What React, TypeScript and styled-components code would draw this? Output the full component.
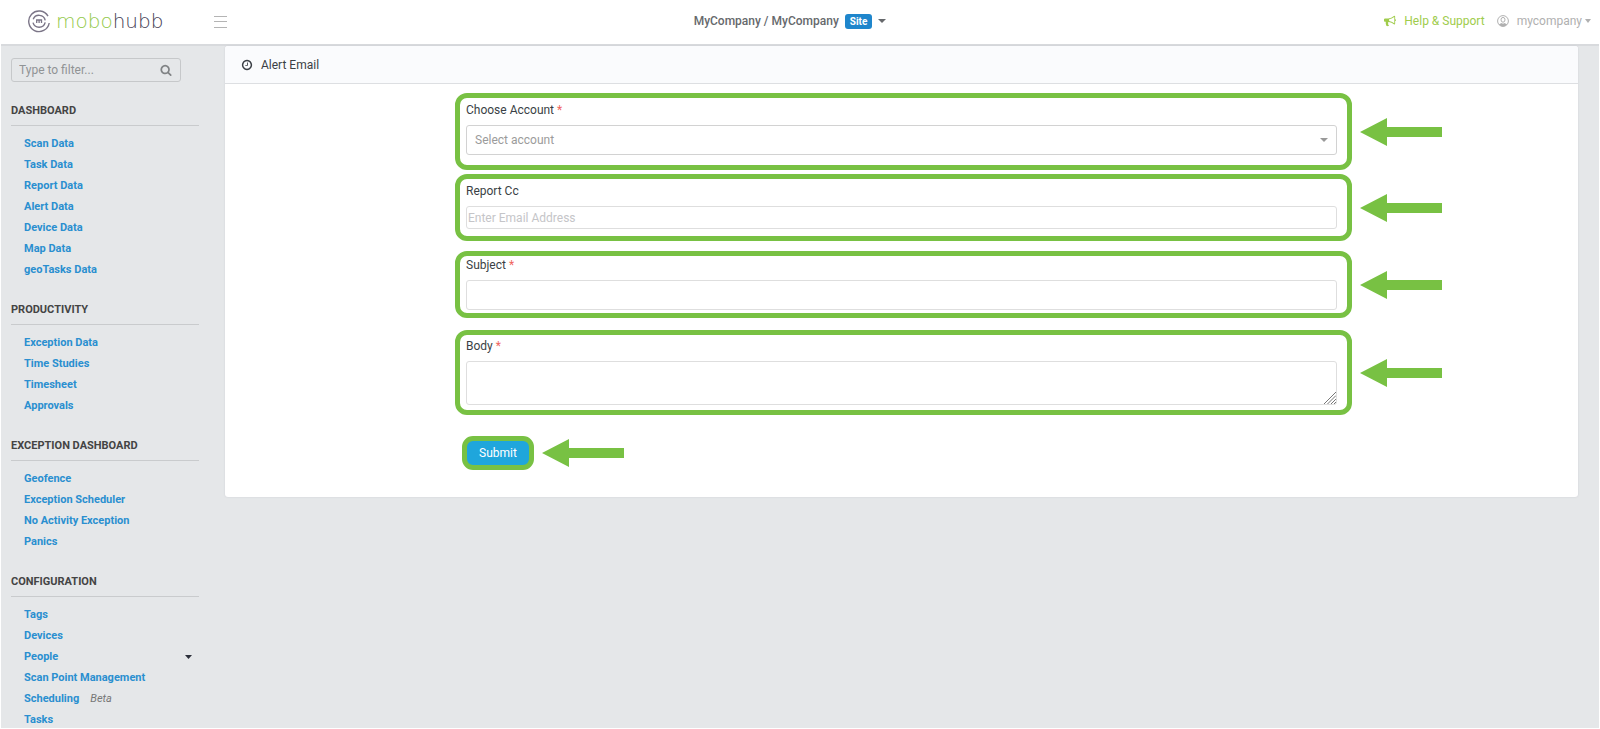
import React from "react";
import styled, { createGlobalStyle } from "styled-components";

const GREEN = "#78c143";

const GlobalStyle = createGlobalStyle`
  *, *::before, *::after { box-sizing: border-box; }
  body {
    margin: 0;
    background: #fff;
    color: #3a3f45;
    font-family: Roboto, "Liberation Sans", sans-serif;
    font-size: 12px;
    line-height: 16px;
  }
  button, input, select, textarea { font: inherit; color: inherit; }
  a { text-decoration: none; }
  svg { display: block; flex: none; }
`;

const Page = styled.div`
  display: flex;
  flex-direction: column;
  height: 100vh;
`;

const TopBar = styled.header`
  display: grid;
  grid-template-columns: 1fr auto 1fr;
  flex: none;
  align-items: center;
  height: 46px;
  margin: 0 1px;
  padding: 0 8px 2px 26px;
  border-bottom: 2px solid #d8dadd;
`;

const BrandGroup = styled.div`
  display: flex;
  align-items: center;
`;

const Brand = styled.a`
  display: flex;
  align-items: center;
  gap: 5px;
  width: 187px;
  color: #7b7587;
`;

const BrandName = styled.span<{ $dark?: boolean }>`
  font-family: "DejaVu Sans Light", "DejaVu Sans", sans-serif;
  font-weight: 200;
  font-size: 20px;
  line-height: 24px;
  color: ${(p) => (p.$dark ? "#453d55" : "#93c94a")};
`;

const PlainButton = styled.button`
  display: flex;
  align-items: center;
  gap: 6px;
  padding: 0;
  border: 0;
  background: none;
  cursor: pointer;
`;

const MenuButton = styled(PlainButton)`
  color: #b4b4b4;
`;

const SitePicker = styled(PlainButton)`
  margin-right: 38px;
  color: #66696c;
  font-weight: 500;
`;

const SiteBadge = styled.span`
  padding: 0 5px;
  border-radius: 3px;
  background: #1f86cc;
  color: #fff;
  font-size: 10px;
  font-weight: 700;
  line-height: 15px;
`;

const Account = styled.div`
  display: flex;
  justify-content: flex-end;
  align-items: center;
  gap: 12px;
`;

const HelpLink = styled.a`
  display: flex;
  align-items: center;
  gap: 8px;
  color: #a0cc4c;
`;

const UserButton = styled(PlainButton)`
  gap: 8px;
  color: #b0b0b0;
`;

const UserName = styled.span`
  display: flex;
  align-items: center;
  gap: 3px;
`;

const Workspace = styled.div`
  display: flex;
  flex: 1;
  min-height: 0;
  margin: 0 1px 1px;
  background: #e5e7e9;
`;

const Sidebar = styled.nav`
  flex: none;
  width: 224px;
  padding: 12px 26px 0 10px;
  overflow-y: auto;
  scrollbar-width: none;
`;

const Filter = styled.label`
  display: flex;
  align-items: center;
  width: 170px;
  height: 24px;
  padding: 0 8px 0 7px;
  border: 1px solid #c6c8ca;
  border-radius: 3px;
  color: #808385;
`;

const FilterInput = styled.input`
  flex: 1;
  min-width: 0;
  padding: 0;
  border: 0;
  outline: 0;
  background: none;
  &::placeholder { color: #909395; opacity: 1; }
`;

const Group = styled.section`
  padding-top: 21px;
`;

const GroupTitle = styled.h2`
  margin: 0 0 7px;
  padding-bottom: 6px;
  border-bottom: 1px solid #c9cbcd;
  color: #444;
  font-size: 11px;
  font-weight: 700;
  line-height: 16px;
`;

const LinkList = styled.ul`
  margin: 0;
  padding: 0 7px 1px 13px;
  list-style: none;
`;

const LinkRow = styled.li`
  display: flex;
  align-items: center;
  height: 21px;
`;

const NavLink = styled.a`
  color: #2a8fd0;
  font-size: 11px;
  font-weight: 700;
`;

const Beta = styled.em`
  margin-left: 11px;
  color: #777;
  font-size: 11px;
`;

const Expander = styled(PlainButton)`
  margin-left: auto;
  color: #2b2f3a;
`;

const Main = styled.main`
  flex: 1;
  min-width: 0;
  padding-right: 21px;
`;

const Panel = styled.section`
  border-radius: 3px;
  background: #fff;
  box-shadow: 0 0 2px #c9ccd2;
`;

const PanelHeader = styled.header`
  display: flex;
  align-items: center;
  gap: 8px;
  height: 38px;
  padding-left: 16px;
  border-bottom: 1px solid #dddfe2;
  border-radius: 3px 3px 0 0;
  background: #fafbfd;
`;

const PanelTitle = styled.h1`
  margin: 0;
  font-size: 12px;
  font-weight: 400;
`;

const Form = styled.form`
  padding: 9px 2px 27px 17%;
`;

const Row = styled.div<{ $gap: number }>`
  display: flex;
  align-items: center;
  gap: 8px;
  margin-bottom: ${(p) => p.$gap}px;
`;

const Highlight = styled.div<{ $top: number; $bottom: number }>`
  width: 80%;
  padding: ${(p) => p.$top}px 10px ${(p) => p.$bottom}px 6px;
  border: 5px solid ${GREEN};
  border-radius: 12px;
`;

const Label = styled.label`
  display: block;
  margin-bottom: 7px;
`;

const Required = styled.span`
  color: #f0655e;
`;

const FieldWrap = styled.div`
  position: relative;
`;

const Control = styled.input<{ $height: number }>`
  display: block;
  width: 100%;
  height: ${(p) => p.$height}px;
  padding: 0 1px;
  border: 1px solid #dedede;
  border-radius: 3px;
  outline: 0;
  background: #fff;
  &::placeholder { color: #c5c5c8; opacity: 1; }
`;

const AccountSelect = styled(Control)`
  padding: 0 8px;
  border-color: #d2d2d2;
  color: #9b9b9b;
  appearance: none;
`;

const BodyText = styled(Control)`
  resize: none;
`;

const SelectCaret = styled.span`
  position: absolute;
  top: 13px;
  right: 9px;
  color: #999;
  pointer-events: none;
`;

const Grip = styled.span`
  position: absolute;
  right: 1px;
  bottom: 1px;
  color: #777;
  pointer-events: none;
`;

const SubmitRow = styled(Row)`
  padding-left: 7px;
`;

const SubmitButton = styled.button`
  width: 72px;
  height: 34px;
  padding: 0;
  border: 5px solid ${GREEN};
  border-radius: 11px;
  background: #1fa6dc;
  color: #fff;
  cursor: pointer;
`;

const Caret = ({ width = 8 }: { width?: number }) => (
  <svg width={width} height="4" viewBox="0 0 8 4" preserveAspectRatio="none" fill="currentColor" aria-hidden="true">
    <path d="M0 0h8L4 4z" />
  </svg>
);

const Arrow = () => (
  <svg width="82" height="28" viewBox="0 0 82 28" fill={GREEN} aria-hidden="true">
    <path d="M0 14 27 0v9h55v10H27v9z" />
  </svg>
);

const Glyph = ({ size, d }: { size: number; d: string }) => (
  <svg width={size} height={size} viewBox="0 0 1792 1792" fill="currentColor" aria-hidden="true">
    <path d={d} />
  </svg>
);

const CLOCK =
  "M1024 544v448q0 14-9 23t-23 9h-320q-14 0-23-9t-9-23v-64q0-14 9-23t23-9h224v-352q0-14 9-23t23-9h64q14 0 23 9t9 23zm416 352q0-148-73-273t-198-198-273-73-273 73-198 198-73 273 73 273 198 198 273 73 273-73 198-198 73-273zm224 0q0 209-103 385.5t-279.5 279.5-385.5 103-385.5-103-279.5-279.5-103-385.5 103-385.5 279.5-279.5 385.5-103 385.5 103 279.5 279.5 103 385.5z";
const SEARCH =
  "M1216 832q0-185-131.5-316.5t-316.5-131.5-316.5 131.5-131.5 316.5 131.5 316.5 316.5 131.5 316.5-131.5 131.5-316.5zm512 832q0 52-38 90t-90 38q-54 0-90-38l-343-342q-179 124-399 124-143 0-273.5-55.5t-225-150-150-225-55.5-273.5 55.5-273.5 150-225 225-150 273.5-55.5 273.5 55.5 225 150 150 225 55.5 273.5q0 220-124 399l343 343q37 37 37 90z";
const BULLHORN =
  "M1664 640q53 0 90.5 37.5t37.5 90.5-37.5 90.5-90.5 37.5v384q0 52-38 90t-90 38q-417-347-812-380-58 19-91 66t-31 100.5 40 92.5q-20 33-23 65.5t6 58 33.5 55 48 50 61.5 50.5q-29 58-111.5 83t-168.5 11.5-132-55.5q-7-23-29.5-87.5t-32-94.5-23-89-15-101 3.5-98.5 22-110.5h-122q-66 0-113-47t-47-113v-192q0-66 47-113t113-47h480q435 0 896-384 52 0 90 38t38 90v384zm-128 604v-954q-394 302-768 343v270q377 42 768 341z";

const LogoMark = () => (
  <svg width="24" height="24" viewBox="0 0 24 24" fill="none" stroke="currentColor" strokeWidth="1.4" aria-hidden="true">
    <path d="M21 7.2A10.3 10.3 0 1 0 22.2 14" />
    <path d="M6.2 10.2A6.3 6.3 0 0 1 18.2 11.4M18.2 13.4A6.3 6.3 0 0 1 6 13.6" />
    <path d="M9.7 14v-3h4.8v3M12.1 11v3" strokeWidth="1.3" />
  </svg>
);

const MenuIcon = () => (
  <svg width="13" height="13" viewBox="0 0 13 13" stroke="currentColor" aria-hidden="true">
    <path d="M0 1.5h13M0 6.5h13M0 12.5h13" />
  </svg>
);

const UserIcon = () => (
  <svg width="12" height="12" viewBox="0 0 12 12" fill="none" stroke="currentColor" aria-hidden="true">
    <circle cx="6" cy="6" r="5.4" />
    <ellipse cx="6" cy="4.8" rx="2" ry="2.4" />
    <path d="M1.8 9.4 4.4 8q1.6 1.2 3.2 0l2.6 1.4Q6 13.6 1.8 9.4z" fill="currentColor" stroke="none" />
  </svg>
);

const groups = [
  {
    title: "DASHBOARD",
    links: ["Scan Data", "Task Data", "Report Data", "Alert Data", "Device Data", "Map Data", "geoTasks Data"],
  },
  { title: "PRODUCTIVITY", links: ["Exception Data", "Time Studies", "Timesheet", "Approvals"] },
  { title: "EXCEPTION DASHBOARD", links: ["Geofence", "Exception Scheduler", "No Activity Exception", "Panics"] },
  { title: "CONFIGURATION", links: ["Tags", "Devices", "People", "Scan Point Management", "Scheduling", "Tasks"] },
];

export default function App() {
  return (
    <Page>
      <GlobalStyle />
      <TopBar>
        <BrandGroup>
          <Brand href="#">
            <LogoMark />
            <span>
              <BrandName>mobo</BrandName>
              <BrandName $dark>hubb</BrandName>
            </span>
          </Brand>
          <MenuButton type="button" aria-label="Toggle menu">
            <MenuIcon />
          </MenuButton>
        </BrandGroup>
        <SitePicker type="button">
          MyCompany / MyCompany <SiteBadge>Site</SiteBadge>
          <Caret />
        </SitePicker>
        <Account>
          <HelpLink href="#">
            <Glyph size={12} d={BULLHORN} />
            Help &amp; Support
          </HelpLink>
          <UserButton type="button">
            <UserIcon />
            <UserName>
              mycompany
              <Caret width={6} />
            </UserName>
          </UserButton>
        </Account>
      </TopBar>
      <Workspace>
        <Sidebar>
          <Filter>
            <FilterInput type="text" placeholder="Type to filter..." aria-label="Type to filter" />
            <Glyph size={12} d={SEARCH} />
          </Filter>
          {groups.map((group) => (
            <Group key={group.title}>
              <GroupTitle>{group.title}</GroupTitle>
              <LinkList>
                {group.links.map((link) => (
                  <LinkRow key={link}>
                    <NavLink href="#">{link}</NavLink>
                    {link === "Scheduling" && <Beta>Beta</Beta>}
                    {link === "People" && (
                      <Expander type="button" aria-label="Expand People">
                        <Caret width={7} />
                      </Expander>
                    )}
                  </LinkRow>
                ))}
              </LinkList>
            </Group>
          ))}
        </Sidebar>
        <Main>
          <Panel>
            <PanelHeader>
              <Glyph size={12} d={CLOCK} />
              <PanelTitle>Alert Email</PanelTitle>
            </PanelHeader>
            <Form onSubmit={(e) => e.preventDefault()}>
              <Row $gap={4}>
                <Highlight $top={4} $bottom={10}>
                  <Label htmlFor="account">
                    Choose Account <Required>*</Required>
                  </Label>
                  <FieldWrap>
                    <AccountSelect as="select" id="account" $height={30} defaultValue="">
                      <option value="">Select account</option>
                    </AccountSelect>
                    <SelectCaret>
                      <Caret />
                    </SelectCaret>
                  </FieldWrap>
                </Highlight>
                <Arrow />
              </Row>
              <Row $gap={10}>
                <Highlight $top={4} $bottom={7}>
                  <Label htmlFor="cc">Report Cc</Label>
                  <Control id="cc" type="text" placeholder="Enter Email Address" $height={23} />
                </Highlight>
                <Arrow />
              </Row>
              <Row $gap={12}>
                <Highlight $top={1} $bottom={3}>
                  <Label htmlFor="subject">
                    Subject <Required>*</Required>
                  </Label>
                  <Control id="subject" type="text" $height={30} />
                </Highlight>
                <Arrow />
              </Row>
              <Row $gap={21}>
                <Highlight $top={3} $bottom={5}>
                  <Label htmlFor="body">
                    Body <Required>*</Required>
                  </Label>
                  <FieldWrap>
                    <BodyText as="textarea" id="body" $height={44} />
                    <Grip>
                      <svg width="12" height="12" viewBox="0 0 12 12" stroke="currentColor" aria-hidden="true">
                        <path d="M0 12 12 0M3.5 12 12 3.5M7 12l5-5M10 12l2-2" />
                      </svg>
                    </Grip>
                  </FieldWrap>
                </Highlight>
                <Arrow />
              </Row>
              <SubmitRow $gap={0}>
                <SubmitButton type="submit">Submit</SubmitButton>
                <Arrow />
              </SubmitRow>
            </Form>
          </Panel>
        </Main>
      </Workspace>
    </Page>
  );
}
